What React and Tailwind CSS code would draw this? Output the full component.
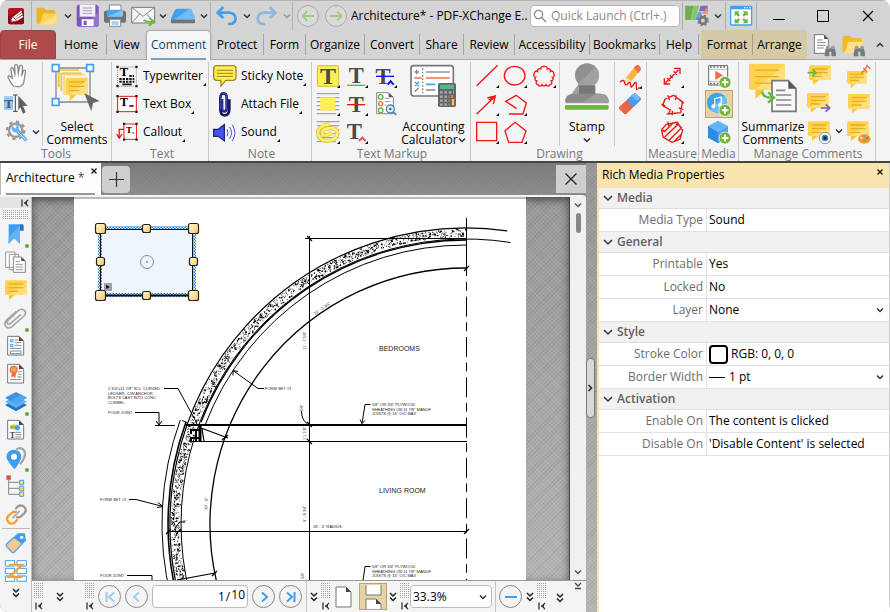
import { useState } from "react";

const CX = 466;
const CY = 524;

// point on a circle around the plan's centre, angle in degrees, 90 = top
const at = (r, deg) => {
  const a = (deg * Math.PI) / 180;
  return `${(CX + r * Math.cos(a)).toFixed(1)} ${(CY - r * Math.sin(a)).toFixed(1)}`;
};
const arc = (r, from, to) => `M${at(r, from)}A${r} ${r} 0 0 0 ${at(r, to)}`;

// concrete hatch: repeatable random specks between the two wall faces
const makeSpecks = () => {
  let seed = 17;
  const rnd = () => {
    seed = (seed * 16807) % 2147483647;
    return seed / 2147483647;
  };
  let fine = "";
  let bold = "";
  for (let i = 0; i < 1350; i++) {
    const p = at(287 + rnd() * 8, 90 + rnd() * 102);
    if (rnd() < 0.4) bold += `M${p}l${(rnd() * 2).toFixed(1)} ${(rnd() * 2 - 1).toFixed(1)}`;
    else fine += `M${p}h0.8`;
  }
  return { fine, bold };
};
const specks = makeSpecks();

// pentagon whose edges are each three small bumps
const cloudPath = (() => {
  const pts = [[699, 26], [728, 47], [717, 80], [681, 80], [670, 47]];
  let d = `M${pts[0].join(" ")}`;
  pts.forEach(([x, y], i) => {
    const [nx, ny] = pts[(i + 1) % 5];
    for (let k = 1; k <= 3; k++) {
      d += `A6.5 6.5 0 0 1 ${(x + ((nx - x) * k) / 3).toFixed(1)} ${(y + ((ny - y) * k) / 3).toFixed(1)}`;
    }
  });
  return d + "z";
})();

const tabs = [
  { name: "Home", cls: "w-[51px] border-r" },
  { name: "View", cls: "w-[39px]" },
  { name: "Comment", cls: "w-[65px]" },
  { name: "Protect", cls: "w-[53px] border-r" },
  { name: "Form", cls: "w-[42px] border-r" },
  { name: "Organize", cls: "w-[59px] border-r" },
  { name: "Convert", cls: "w-[55px] border-r" },
  { name: "Share", cls: "w-[44px] border-r" },
  { name: "Review", cls: "w-[51px] border-r" },
  { name: "Accessibility", cls: "w-[75px] border-r" },
  { name: "Bookmarks", cls: "w-[70px] border-r" },
  { name: "Help", cls: "w-[39px] border-r" },
];

function Icon({ box, w, h, children }) {
  return (
    <svg viewBox={box} width={w} height={h} fill="none" className="block shrink-0 overflow-visible" aria-hidden="true">
      {children}
    </svg>
  );
}

function Chevron({ color = "#333", up = false }) {
  return (
    <Icon box="0 0 8 8" w={8} h={8}>
      <path d={up ? "M1 5.5 4 2.5 7 5.5" : "M1 2.5 4 5.5 7 2.5"} stroke={color} strokeWidth="1.5" />
    </Icon>
  );
}

function DoubleChevron() {
  return (
    <Icon box="0 0 8 10" w={8} h={10}>
      <path d="M1 1 4 4 7 1M1 5.5 4 8.5 7 5.5" stroke="#222" strokeWidth="1.5" />
    </Icon>
  );
}

function Collapse() {
  return (
    <Icon box="0 0 8 8" w={8} h={8}>
      <path d="M1 0.5v7M7 1 4 4 7 7M3 4h3" stroke="#333" strokeWidth="1.3" />
    </Icon>
  );
}

function Dots({ w, h }) {
  const rows = [];
  for (let y = 0.5; y < h; y += 2) rows.push(`M0 ${y}h${w}`);
  return (
    <Icon box={`0 0 ${w} ${h}`} w={w} h={h}>
      <path d={rows.join("")} stroke="#a3a3a3" strokeDasharray="1 1" />
    </Icon>
  );
}

function Grip() {
  return (
    <div className="flex w-[11px] shrink-0 flex-col items-center gap-1">
      <Dots w={9} h={15} />
      <Collapse />
    </div>
  );
}

function Corner() {
  return <span className="mb-1 h-0 w-0 self-end border-b-3 border-l-3 border-b-black border-l-transparent" />;
}

function Bubble({ x, y, w = 66, h = 44, lines = 3 }) {
  const step = h / (lines + 1);
  return (
    <g>
      <rect x={x} y={y} width={w} height={h} rx="4" fill="#ffd24d" />
      <path d={`M${x + w * 0.18} ${y + h - 1}v${h * 0.36}l${w * 0.3}-${h * 0.36}z`} fill="#fcc532" />
      <path d={`M${x + w * 0.15} ${y + h} ${x + w} ${y + 4}v${h - 8}q0 4-4 4z`} fill="#ffdf7d" />
      {Array.from({ length: lines }, (_, i) => (
        <path key={i} d={`M${x + w * 0.16} ${y + step * (i + 1)}h${w * (i === lines - 1 ? 0.45 : 0.68)}`} stroke="#e8ae22" strokeWidth="4" />
      ))}
    </g>
  );
}

function Plus({ x, y }) {
  return (
    <g>
      <circle cx={x} cy={y} r="18" fill="#76b43f" stroke="#fff" strokeWidth="2" />
      <path d={`M${x - 10} ${y}h20M${x} ${y - 10}v20`} stroke="#fff" strokeWidth="6" />
    </g>
  );
}

function BigT({ x, y, size = 72, color = "#4a4a4a" }) {
  return (
    <text x={x} y={y} fontSize={size} fontWeight="bold" fontFamily="Liberation Serif, serif" fill={color} textAnchor="middle">
      T
    </text>
  );
}

function Mark({ x, y }) {
  return <path d={`M${x} ${y}h-9l9-9z`} fill="#000" />;
}

function Binoculars({ x, y }) {
  return (
    <g transform={`translate(${x} ${y})`}>
      <path d="M4 6q5-8 10 0v4h6V6q5-8 10 0l4 20v8H20V20h-6v14H0v-8z" fill="#747b82" />
      <path d="M4 6q5-8 10 0v6H3zM20 6q5-8 10 0l1 6H20z" fill="#99a0a6" />
    </g>
  );
}

function ToolButton({ label, children, className = "w-7" }) {
  return (
    <button type="button" aria-label={label} title={label} className={`flex h-7 items-center justify-center ${className}`}>
      {children}
    </button>
  );
}

function Group({ label, className = "", children }) {
  return (
    <section className={`flex shrink-0 flex-col border-r border-[#c6c6c6] ${className}`}>
      <div className="flex h-[85px]">{children}</div>
      <h2 className="text-center leading-4 whitespace-nowrap text-[#777]">{label}</h2>
    </section>
  );
}

function LabelButton({ label, children }) {
  return (
    <button type="button" className="flex h-7 items-center whitespace-nowrap">
      {children}
      <span className="pl-1">{label}</span>
      <Corner />
    </button>
  );
}

function TitleBar() {
  return (
    <header className="flex h-[30px] items-center border-t border-[#b4b4b4]">
      <button type="button" aria-label="Application menu" className="flex h-full w-8 items-center justify-center border-r border-[#b0b0b0]">
        <Icon box="18 14 54 54" w={18} h={18}>
          <rect x="21" y="17" width="48" height="49" rx="7" fill="#b4131d" />
          <path d="M21 42 69 22v38q0 6-6 6H27q-6 0-6-6z" fill="#8c0c16" />
          <path d="M38 45 62 27M42 49 64 34M46 54 66 42" stroke="#fff" strokeWidth="5" />
          <path d="m28 58 7-14 12 12z" fill="#fff" />
          <path d="m28 58 6-4" stroke="#a00" strokeWidth="3" />
        </Icon>
      </button>
      <ToolButton label="Open" className="w-[30px]">
        <Icon box="104 12 75 64" w={25} h={21}>
          <path d="M108 26q0-6 6-6h16l7 7h23q5 0 5 5v8l-30 30h-21q-6 0-6-6z" fill="#eab32a" />
          <path d="M132 38h43q3 0 2 3l-11 27q-2 4-6 4h-46q10-8 12-29 1-5 6-5z" fill="#fdd35b" />
          <path d="m114 72 62-34-12 32-4 2z" fill="#ffe089" />
        </Icon>
      </ToolButton>
      <ToolButton label="Open recent" className="w-3"><Chevron /></ToolButton>
      <ToolButton label="Save" className="w-[27px]">
        <Icon box="226 10 72 72" w={24} h={24}>
          <path d="M234 12h54l6 6v55q0 5-5 5h-55q-6 0-6-6V18q0-6 6-6z" fill="#7e57b8" />
          <path d="m250 78 44-44v39q0 5-5 5z" fill="#9575cd" />
          <rect x="237" y="12" width="47" height="36" fill="#f1eef6" />
          <path d="M246 22h28M246 30h28M246 38h28" stroke="#a9a3b5" strokeWidth="3" />
          <path d="M243 56h36v20h-36z" fill="#fff" />
          <path d="M249 60h9v13h-9z" fill="#7e57b8" />
        </Icon>
      </ToolButton>
      <ToolButton label="Print">
        <Icon box="309 10 72 72" w={24} h={24}>
          <path d="M328 13h35v22h-35z" fill="#fff" stroke="#888" strokeWidth="3" />
          <rect x="312" y="30" width="66" height="36" rx="6" fill="#707070" />
          <path d="M321 27h48v17q0 4-4 4h-40q-4 0-4-4z" fill="#42a5f5" />
          <path d="M321 48 369 27v17q0 4-4 4z" fill="#7fc3f9" />
          <path d="M329 56h33v21h-33z" fill="#fff" stroke="#888" strokeWidth="3" />
          <path d="M335 64h21M335 70h21" stroke="#42a5f5" strokeWidth="3" />
        </Icon>
      </ToolButton>
      <ToolButton label="Send by e-mail">
        <Icon box="390 12 78 66" w={26} h={22}>
          <path d="M395 19h69v47h-69z" fill="#f4f4f4" stroke="#777" strokeWidth="3" />
          <path d="m395 19 34 27 35-27M395 66l24-27M464 66l-24-27" stroke="#888" strokeWidth="3" />
          <path d="M431 57q10 8 26 5M449 51l12 11-14 12" stroke="#73b53e" strokeWidth="6" />
        </Icon>
      </ToolButton>
      <ToolButton label="E-mail options" className="w-3"><Chevron /></ToolButton>
      <ToolButton label="Scan">
        <Icon box="510 12 78 66" w={26} h={22}>
          <path d="M532 23h37q4 0 6 4l10 24v8h-72v-8l12-24q2-4 7-4z" fill="#42a0f0" />
          <path d="m521 56 48-33q4 0 6 4l10 24v5z" fill="#74bbf6" />
          <path d="M513 56h72v8q0 3-3 3h-66q-3 0-3-3z" fill="#737373" />
        </Icon>
      </ToolButton>
      <ToolButton label="Scan options" className="w-[14px] border-r border-[#b0b0b0]"><Chevron /></ToolButton>
      <ToolButton label="Undo" className="w-[30px]">
        <Icon box="644 12 66 66" w={22} h={22}>
          <path d="M656 35h31q18 2 19 17-1 17-20 17h-3" stroke="#42a0f0" strokeWidth="8" />
          <path d="m669 18-17 17 17 16" stroke="#42a0f0" strokeWidth="8" />
        </Icon>
      </ToolButton>
      <ToolButton label="Undo list" className="w-3"><Chevron /></ToolButton>
      <ToolButton label="Redo">
        <Icon box="764 12 66 66" w={22} h={22}>
          <path d="M818 35h-31q-17 2-18 17 1 17 20 17h3" stroke="#8fb8dc" strokeWidth="8" />
          <path d="m805 18 17 17-17 16" stroke="#8fb8dc" strokeWidth="8" />
        </Icon>
      </ToolButton>
      <ToolButton label="Redo list" className="w-3 border-r border-[#b0b0b0]"><Chevron color="#999" /></ToolButton>
      <ToolButton label="Previous view" className="w-[30px]">
        <Icon box="-12 -12 24 24" w={24} h={24}>
          <circle r="10.5" stroke="#aaa" fill="#dadada" />
          <path d="M6 0H-5M-1-4.500-5.500 0-1 4.500" stroke="#a2cd80" strokeWidth="2" />
        </Icon>
      </ToolButton>
      <ToolButton label="Next view" className="w-[26px]">
        <Icon box="-12 -12 24 24" w={24} h={24}>
          <circle r="10.5" stroke="#aaa" fill="#dadada" />
          <path d="M-6 0H5M1-4.500 5.500 0 1 4.500" stroke="#a2cd80" strokeWidth="2" />
        </Icon>
      </ToolButton>
      <h1 className="min-w-0 flex-1 pl-0.5 whitespace-nowrap">Architecture* - PDF-XChange E..</h1>
      <label className="flex h-[22px] w-[150px] shrink-0 items-center gap-1 rounded-sm border border-[#b8b8b8] bg-white pl-0.5">
        <Icon box="0 0 14 14" w={14} h={14}>
          <circle cx="5.500" cy="5.500" r="4.200" stroke="#888" strokeWidth="1.200" />
          <path d="m8.500 8.500 4.500 4.500" stroke="#888" strokeWidth="1.400" />
        </Icon>
        <input type="text" aria-label="Quick Launch" placeholder="Quick Launch (Ctrl+.)" className="w-full min-w-0 outline-none placeholder:text-[#8a8a8a]" />
      </label>
      <ToolButton label="UI options" className="ml-0.5 w-[29px] border-l border-[#b0b0b0]">
        <Icon box="285 12 78 70" w={26} h={23}>
          <path d="M288 17h25l-8 44h-17z" fill="#6fb04c" />
          <path d="m313 17-8 44h14l12-44z" fill="#8bc46b" />
          <path d="M335 17h22v17h-27z" fill="#8a63c4" />
          <path d="M357 20v22h-18z" fill="#ef8a6c" />
          <path d="m328 37-10 24h8l14-24z" fill="#4ea5ef" />
          <circle cx="342" cy="62" r="10" stroke="#777" strokeWidth="8" />
          <circle cx="342" cy="62" r="15" stroke="#777" strokeWidth="5" strokeDasharray="6 6" />
        </Icon>
      </ToolButton>
      <ToolButton label="UI options list" className="w-[14px]"><Chevron /></ToolButton>
      <ToolButton label="Full screen" className="w-[32px] border-x border-[#b0b0b0]">
        <Icon box="417 12 72 63" w={24} h={21}>
          <rect x="422" y="16" width="63" height="56" rx="2" fill="#fff" stroke="#42a0f0" strokeWidth="4" />
          <path d="M421 15h65v10h-65z" fill="#42a0f0" />
          <path d="M462 20h4M470 20h4M478 20h4" stroke="#fff" strokeWidth="4" />
          <path d="M434 31h15l-5 5 6 6-5 5-6-6-5 5zM473 31h-15l5 5-6 6 5 5 6-6 5 5zM434 67h15l-5-5 6-6-5-5-6 6-5-5zM473 67h-15l5-5-6-6 5-5 6 6 5-5z" fill="#6db33f" />
        </Icon>
      </ToolButton>
      <button type="button" aria-label="Minimize" className="flex w-11 justify-center">
        <Icon box="0 0 12 12" w={12} h={12}><path d="M0 9.500h12" stroke="#000" /></Icon>
      </button>
      <button type="button" aria-label="Maximize" className="flex w-11 justify-center">
        <Icon box="0 0 12 12" w={12} h={12}><path d="M.5.5h11v11H.5z" stroke="#000" /></Icon>
      </button>
      <button type="button" aria-label="Close" className="flex w-[45px] justify-center">
        <Icon box="0 0 12 12" w={12} h={12}><path d="m1 1 10 10M11 1 1 11" stroke="#000" strokeWidth="1.200" /></Icon>
      </button>
    </header>
  );
}

function TabRow({ active, onSelect }) {
  return (
    <nav className="flex h-[30px] items-stretch border-b border-[#a8a8a8]">
      <button type="button" className="w-14 shrink-0 rounded-t-sm border border-[#9a4545] bg-[#ae4a4a] text-white">File</button>
      {tabs.map(t =>
        t.name === active ? (
          <button key={t.name} type="button" className={`-mb-px shrink-0 rounded-t border border-b-0 border-[#aaa] bg-[#f5f5f5] px-1 text-[#153e6b] shadow ${t.cls}`}>
            <span className="flex h-full items-end border-b-2 border-[#7f9fb5] pb-[5px]">
              <span className="w-full text-center">{t.name}</span>
            </span>
          </button>
        ) : (
          <button key={t.name} type="button" onClick={() => onSelect(t.name)} className={`my-1 shrink-0 border-[#a5a5a5] ${t.cls}`}>
            {t.name}
          </button>
        )
      )}
      <div className="ml-0.5 flex shrink-0 border-x border-[#dccb94] bg-[#d5caa5] py-1">
        <button type="button" className="w-[51px] border-r border-[#a9a184]">Format</button>
        <button type="button" className="w-[53px]">Arrange</button>
      </div>
      <div className="flex flex-1 items-center justify-end gap-1">
        <button type="button" aria-label="Find">
          <Icon box="657 99 75 72" w={25} h={24}>
            <path d="M664 104h29l13 13v43h-42z" fill="#fff" stroke="#777" strokeWidth="3" />
            <path d="M693 104v13h13z" fill="#555" />
            <path d="M672 120h16M672 128h26M672 136h26M672 144h20" stroke="#888" strokeWidth="3" />
            <Binoculars x={695} y={135} />
          </Icon>
        </button>
        <button type="button" aria-label="Search">
          <Icon box="741 99 75 72" w={25} h={24}>
            <path d="M745 112q0-5 5-5h18l6 7h25q5 0 5 5v10l-30 30h-24q-5 0-5-5z" fill="#f0bb32" />
            <path d="M766 125h42l-9 29q-1 5-6 5h-45q11-8 13-29 1-5 5-5z" fill="#ffe08a" />
            <Binoculars x={779} y={135} />
          </Icon>
        </button>
        <button type="button" aria-label="Collapse ribbon" className="flex w-5 justify-center"><Chevron up /></button>
      </div>
    </nav>
  );
}

function BigButton({ lines, children, chevron, className = "" }) {
  return (
    <button type="button" className={`flex shrink-0 flex-col items-center justify-between leading-[13px] whitespace-nowrap ${className}`}>
      {children}
      <span>
        {lines[0]}
        <span className="flex h-[13px] items-center justify-center">
          {lines[1]}
          {chevron && <Chevron />}
        </span>
      </span>
    </button>
  );
}

function TextLines({ y }) {
  return <path d={`M20 ${y}h68M20 ${y + 12}h68M20 ${y + 24}h68M20 ${y + 36}h68M20 ${y + 48}h68M20 ${y + 60}h58`} stroke="#a5a5a5" strokeWidth="4" />;
}

function MediaFrame() {
  return (
    <g>
      <path d="M458 23h57v58h-57z" fill="#fff" stroke="#666" strokeWidth="3" />
      <path d="M462 27h50M462 77h50" stroke="#666" strokeWidth="5" strokeDasharray="5 5" />
      <path d="M458 34h57M458 70h57" stroke="#999" strokeWidth="2" />
      <path d="m478 38 23 14-23 14z" fill="#f4694c" />
    </g>
  );
}

function Ribbon() {
  return (
    <div className="flex h-[103px] shrink-0 border-b-2 border-[#444] bg-[#f4f4f4] pt-0.5 pl-px">
      <Group label="Tools" className="w-[111px]">
        <div className="flex w-[42px] flex-col border-r border-[#c9c9c9]">
          <ToolButton label="Hand" className="w-[30px]">
            <Icon box="15 15 69 80" w={23} h={26}>
              <path d="M39 85Q29 72 23 59q1-7 8-3l6 7-5-28q1-8 7-4l6 18-1-26q4-8 9 0l2 24 4-22q5-6 9 1l-2 26 5-14q6-2 6 4l-5 32q-1 8-9 12-12 4-24-1z" fill="#fff" stroke="#8a8a8a" strokeWidth="4" strokeLinejoin="round" />
              <path d="M44 49v9M55 47v9M65 48l-1 9" stroke="#999" strokeWidth="3" />
            </Icon>
          </ToolButton>
          <ToolButton label="Select text" className="w-[30px]">
            <Icon box="9 105 78 66" w={26} h={22}>
              <path d="M12 115h27v40H12z" fill="#8cc8f7" />
              <BigT x={26} y={149} size={40} color="#555" />
              <path d="M39 111h14M46 111v49M39 160h14" stroke="#444" strokeWidth="3" />
              <path d="m55 113 28 30-14 1 8 19-8 4-8-19-6 9z" fill="#606060" />
            </Icon>
          </ToolButton>
          <div className="flex">
            <ToolButton label="Edit tools" className="w-[31px]">
              <Icon box="12 188 72 72" w={24} h={24}>
                <circle cx="44" cy="219" r="20" stroke="#999" strokeWidth="7" />
                <circle cx="44" cy="219" r="26" stroke="#999" strokeWidth="7" strokeDasharray="10 10.400" />
                <path d="m35 207 8 7 4-7-4-4q12-1 10 13l27 30-7 7-28-28q-14 0-14-15z" fill="#63b2f3" />
                <path d="m52 225 22 22" stroke="#e9f5ff" strokeWidth="3" />
              </Icon>
            </ToolButton>
            <ToolButton label="More tools" className="w-2"><Chevron /></ToolButton>
          </div>
        </div>
        <BigButton lines={["Select", "Comments"]} className="w-[68px]">
          <Icon box="156 16 150 153" w={50} h={51}>
            <path d="M168 34h102v102H168z" stroke="#888" strokeWidth="4" />
            <path d="M176 40h60M176 40v52M184 50h60M184 48v55" stroke="#f3bd37" strokeWidth="5" />
            <path d="M192 54h62M192 54v60" stroke="#ffd768" strokeWidth="5" />
            <Bubble x={197} y={63} w={67} h={52} />
            <path d="M157 24h20v20h-20zM260 24h20v20h-20zM157 126h20v20h-20z" fill="#fff" stroke="#42a0f0" strokeWidth="5" />
            <path d="m253 110 46 23-20 6-5 25z" fill="#666" />
          </Icon>
        </BigButton>
      </Group>

      <Group label="Text" className="w-[97px] pl-1">
        <div className="flex flex-col">
          <LabelButton label="Typewriter">
            <Icon box="351 18 69 72" w={23} h={24}>
              <path d="M356 27h56v58h-56z" stroke="#888" strokeWidth="3" strokeDasharray="3 3" />
              <BigT x={375} y={55} size={38} color="#000" />
              <path d="M391 54h14M361 63h45M361 71h45" stroke="#111" strokeWidth="6" strokeDasharray="7 3" />
              <path d="M370 79h28" stroke="#111" strokeWidth="5" />
              <path d="M352 23h7v7h-7zM409 23h7v7h-7zM352 81h7v7h-7zM409 81h7v7h-7z" fill="#222" />
            </Icon>
          </LabelButton>
          <LabelButton label="Text Box">
            <Icon box="351 102 69 66" w={23} h={22}>
              <path d="M356 112h56v46h-56z" fill="#fff" stroke="#ef1111" strokeWidth="3" />
              <BigT x={375} y={142} size={36} color="#000" />
              <path d="M391 141h13" stroke="#111" strokeWidth="4" />
              <path d="M352 108h7v7h-7zM409 108h7v7h-7zM352 155h7v7h-7zM409 155h7v7h-7z" fill="#222" />
            </Icon>
          </LabelButton>
          <LabelButton label="Callout">
            <Icon box="348 186 72 66" w={23} h={22}>
              <path d="M373 194h39v48h-39z" fill="#fff" stroke="#ef1111" strokeWidth="3" />
              <path d="M373 211h-15v26M350 226l8 12 9-12" stroke="#ef1111" strokeWidth="4" />
              <BigT x={389} y={223} size={28} color="#000" />
              <path d="M399 222h6" stroke="#111" strokeWidth="3" />
              <path d="M370 190h7v7h-7zM409 190h7v7h-7zM370 239h7v7h-7zM409 239h7v7h-7z" fill="#222" />
            </Icon>
          </LabelButton>
        </div>
      </Group>

      <Group label="Note" className="w-[103px] pl-[3px]">
        <div className="flex flex-col">
          <LabelButton label="Sticky Note">
            <Icon box="636 18 75 72" w={25} h={24}>
              <path d="M650 23h49q9 0 9 9v26q0 9-9 9h-22l-14 17v-17h-13q-9 0-9-9V32q0-9 9-9z" fill="#ffee55" stroke="#a58a19" strokeWidth="4" />
              <path d="M650 37h49M650 46h49M650 55h49" stroke="#9c8420" strokeWidth="3" />
            </Icon>
          </LabelButton>
          <LabelButton label="Attach File">
            <Icon box="636 99 75 78" w={25} h={26}>
              <path d="M666 123v27q0 10 7 10t7-10v-30q0-14-9-14t-10 14v34q0 18 13 18t14-18v-30" stroke="#151a68" strokeWidth="8" />
              <path d="M666 123v27q0 10 7 10t7-10v-30q0-14-9-14t-10 14v34" stroke="#5563d5" strokeWidth="2" />
            </Icon>
          </LabelButton>
          <LabelButton label="Sound">
            <Icon box="636 186 75 69" w={25} h={23}>
              <path d="M641 211h14l18-14v48l-18-13h-14z" fill="#4455ee" stroke="#1a2485" strokeWidth="4" />
              <path d="M681 211q6 10 0 21M689 204q11 17 0 35M697 197q15 24 0 49" stroke="#4a5ac8" strokeWidth="3" />
            </Icon>
          </LabelButton>
        </div>
      </Group>

      <Group label="Text Markup" className="w-[159px] pl-0.5">
        <div className="grid w-[86px] shrink-0 grid-cols-3 content-start">
          <ToolButton label="Highlight">
            <Icon box="18 18 75 72" w={25} h={24}>
              <rect x="22" y="23" width="64" height="62" rx="4" fill="#ffee55" stroke="#d4ba36" strokeWidth="3" />
              <BigT x={54} y={77} />
              <Mark x={90} y={90} />
            </Icon>
          </ToolButton>
          <ToolButton label="Underline">
            <Icon box="102 18 75 72" w={25} h={24}>
              <BigT x={139} y={75} size={68} />
              <path d="M111 82h54" stroke="#22dd22" strokeWidth="4" />
              <Mark x={174} y={90} />
            </Icon>
          </ToolButton>
          <ToolButton label="Replace text">
            <Icon box="186 18 75 72" w={25} h={24}>
              <BigT x={216} y={77} size={68} />
              <path d="M195 55h54" stroke="#1111ee" strokeWidth="4" />
              <path d="m230 80 9-10 9 10" stroke="#1111ee" strokeWidth="6" />
              <Mark x={258} y={90} />
            </Icon>
          </ToolButton>
          <ToolButton label="Highlight area">
            <Icon box="18 102 75 72" w={25} h={24}>
              <TextLines y={107} />
              <path d="M31 118h45v39H31z" fill="#ffee55" />
              <Mark x={90} y={174} />
            </Icon>
          </ToolButton>
          <ToolButton label="Strikeout">
            <Icon box="102 102 75 72" w={25} h={24}>
              <BigT x={139} y={162} size={68} />
              <path d="M111 140h54" stroke="#ef1111" strokeWidth="4" />
              <Mark x={174} y={174} />
            </Icon>
          </ToolButton>
          <ToolButton label="Review markup">
            <Icon box="186 99 75 78" w={25} h={26}>
              <path d="M197 104h36l14 14v49h-50z" fill="#fff" stroke="#888" strokeWidth="3" />
              <path d="M233 104v14h14z" fill="#555" />
              <circle cx="209" cy="117" r="7" stroke="#6db33f" strokeWidth="4" />
              <circle cx="209" cy="137" r="6" stroke="#ef6a4c" strokeWidth="4" />
              <circle cx="209" cy="157" r="7" stroke="#6db33f" strokeWidth="4" />
              <path d="M221 121h14M221 131h18M221 141h6" stroke="#999" strokeWidth="3" />
              <circle cx="238" cy="153" r="12" fill="#dff0ff" stroke="#5b7f9c" strokeWidth="4" />
              <circle cx="238" cy="153" r="4" fill="#2277c0" />
              <path d="m246 161 10 10" stroke="#3388dd" strokeWidth="5" />
            </Icon>
          </ToolButton>
          <ToolButton label="Pencil highlight">
            <Icon box="18 186 75 72" w={25} h={24}>
              <TextLines y={191} />
              <path d="M58 198q-40 8-33 33 5 18 28 17 29-2 29-24-3-17-29-13-20 5-16 17 9 10 29-5" stroke="#d8c437" strokeWidth="12" />
              <path d="M58 198q-40 8-33 33 5 18 28 17 29-2 29-24-3-17-29-13-20 5-16 17 9 10 29-5" stroke="#ffee66" strokeWidth="8" />
              <Mark x={90} y={258} />
            </Icon>
          </ToolButton>
          <ToolButton label="Insert text">
            <Icon box="102 186 75 72" w={25} h={24}>
              <BigT x={133} y={243} size={68} />
              <path d="m147 249 10-10 10 10" stroke="#e65050" strokeWidth="6" />
              <Mark x={174} y={258} />
            </Icon>
          </ToolButton>
        </div>
        <BigButton lines={["Accounting", "Calculator"]} chevron className="w-[67px]">
          <Icon box="297 30 147 141" w={49} h={47}>
            <rect x="303" y="41" width="127" height="91" rx="8" fill="#fff" stroke="#777" strokeWidth="5" />
            <path d="M338 49v76" stroke="#888" strokeWidth="4" strokeDasharray="5 5" />
            <path d="M348 60h72" stroke="#888" strokeWidth="4" />
            <path d="M313 78h22M348 78h72" stroke="#f07050" strokeWidth="5" />
            <path d="m315 90 12 12m0-12-12 12M348 97h28" stroke="#42a0f0" strokeWidth="5" />
            <path d="M313 60h14M320 53v14M314 119l12-12M348 114h28" stroke="#888" strokeWidth="4" />
            <rect x="384" y="93" width="54" height="72" rx="5" fill="#666" />
            <path d="M390 98h42v13h-42z" fill="#52b58c" />
            <path d="M390 121h42M390 134h28M390 146h28M390 158h28" stroke="#aaa" strokeWidth="7" strokeDasharray="8 5" />
            <path d="M426 129v9" stroke="#f07050" strokeWidth="7" />
            <path d="M429 141v19" stroke="#f8bf3a" strokeWidth="7" />
          </Icon>
        </BigButton>
      </Group>

      <Group label="Drawing" className="w-[176px] pl-0.5">
        <div className="grid w-[87px] shrink-0 grid-cols-3 content-start border-r border-[#c9c9c9]">
          <ToolButton label="Line">
            <Icon box="495 18 75 72" w={25} h={24}><path d="m500 83 63-61" stroke="#f01515" strokeWidth="4" /><Mark x={567} y={90} /></Icon>
          </ToolButton>
          <ToolButton label="Oval">
            <Icon box="579 18 75 72" w={25} h={24}><ellipse cx="614" cy="53" rx="31" ry="28" stroke="#f01515" strokeWidth="4" /><Mark x={651} y={90} /></Icon>
          </ToolButton>
          <ToolButton label="Cloud">
            <Icon box="663 18 75 72" w={25} h={24}>
              <path d={cloudPath} stroke="#f01515" strokeWidth="4" />
              <Mark x={735} y={90} />
            </Icon>
          </ToolButton>
          <ToolButton label="Arrow">
            <Icon box="495 102 75 72" w={25} h={24}><path d="m500 168 54-52M532 120l24-6-6 24M554 116l-18 10" stroke="#f01515" strokeWidth="4" /><Mark x={567} y={174} /></Icon>
          </ToolButton>
          <ToolButton label="Polyline">
            <Icon box="579 102 75 72" w={25} h={24}><path d="m620 152-33-22 32-18 30 23-10 33h-42" stroke="#f01515" strokeWidth="4" /><Mark x={651} y={174} /></Icon>
          </ToolButton>
          <span />
          <ToolButton label="Rectangle">
            <Icon box="495 186 75 72" w={25} h={24}><path d="M500 193h60v55h-60z" stroke="#f01515" strokeWidth="4" /><Mark x={567} y={258} /></Icon>
          </ToolButton>
          <ToolButton label="Polygon">
            <Icon box="579 186 75 72" w={25} h={24}><path d="m615 193 33 26-12 34h-40l-11-34z" stroke="#f01515" strokeWidth="4" /><Mark x={651} y={258} /></Icon>
          </ToolButton>
        </div>
        <BigButton lines={["Stamp", ""]} chevron className="w-[54px]">
          <Icon box="21 16 144 147" w={48} h={49}>
            <circle cx="93" cy="56" r="36" fill="#919191" />
            <path d="M68 81 118 30q11 12 11 26 0 22-18 32v22q8 1 24 2 20 2 23 28H28z" fill="#a1a1a1" />
            <path d="M69 86h49v28H69z" fill="#777" />
            <path d="M27 137q0-26 26-26h81q24 0 24 26z" fill="#8a8a8a" />
            <path d="m77 137 45-26h12q24 0 24 26z" fill="#9d9d9d" />
            <rect x="27" y="145" width="131" height="14" rx="4" fill="#70b542" />
          </Icon>
        </BigButton>
        <div className="flex flex-col border-l border-[#c9c9c9] pl-px">
          <ToolButton label="Pencil">
            <Icon box="186 18 75 75" w={25} h={25}>
              <path d="m211 58 28-35 15 13-28 33-18 6z" fill="#f9b340" />
              <path d="m233 31 6-8q6-5 12 1t3 12l-6 9z" fill="#ed6f4d" />
              <path d="m208 75 4-17 14 11z" fill="#ffe0a8" />
              <path d="M192 72q12-10 14 2t10 3 8 4 9-2 8 5 9 3" stroke="#e01515" strokeWidth="4" />
              <Mark x={258} y={92} />
            </Icon>
          </ToolButton>
          <ToolButton label="Eraser">
            <Icon box="186 102 75 72" w={25} h={24}>
              <path d="m190 146 42-38q4-4 9 0l12 11q4 4 0 8l-41 40q-4 3-8 0l-14-13q-4-4 0-8z" fill="#e8674a" />
              <path d="m212 126 20-18q4-4 9 0l12 11q4 4 0 8l-20 20z" fill="#42a0f0" />
              <path d="m232 108 9 0 12 11-10 9-19-16z" fill="#74bbf6" />
            </Icon>
          </ToolButton>
        </div>
      </Group>

      <Group label="Measure" className="w-[52px] items-stretch">
        <div className="flex w-full flex-col items-center">
          <ToolButton label="Distance">
            <Icon box="315 18 75 72" w={25} h={24}><path d="m331 75 40-40M328 61v17h17M357 31h18v17M336 60l10 10M356 40l10 10M345 52l8 8" stroke="#e81515" strokeWidth="4" /><Mark x={387} y={90} /></Icon>
          </ToolButton>
          <ToolButton label="Perimeter">
            <Icon box="315 102 75 75" w={25} h={25}>
              <path d="m330 123 26-11 26 20-5 32-42 4M330 123l-7 20 23 13-6 12M338 112l6 14M364 112l-3 14M376 126l11 10M371 150l14 4M352 158v14M319 138l12 6" stroke="#e81515" strokeWidth="4" />
              <Mark x={387} y={174} />
            </Icon>
          </ToolButton>
          <ToolButton label="Area">
            <Icon box="315 186 75 72" w={25} h={24}>
              <path d="m334 199 32-6 17 23-8 28-24 9-27-16-4-22zM327 222l28-28M329 237l42-40M343 246l38-38M358 250l22-22M338 191l4 14M319 216l13 4M369 191l-6 12" stroke="#e81515" strokeWidth="4" />
              <Mark x={387} y={258} />
            </Icon>
          </ToolButton>
        </div>
      </Group>

      <Group label="Media" className="w-10">
        <div className="flex w-full flex-col items-center">
          <ToolButton label="Add video">
            <Icon box="450 18 78 75" w={26} h={25}><MediaFrame /><Plus x={507} y={73} /></Icon>
          </ToolButton>
          <ToolButton label="Add sound" className="w-7 border border-[#bba36a] bg-[#e6d3a4]">
            <Icon box="450 102 78 75" w={26} h={25}>
              <circle cx="483" cy="134" r="30" fill="#38a5ea" />
              <path d="M462 155 504 113q9 10 9 21 0 30-30 30-12 0-21-9z" fill="#67bff3" />
              <path d="M476 145v-23l20-5v24" stroke="#fff" strokeWidth="4" />
              <circle cx="472" cy="145" r="6" fill="#fff" />
              <circle cx="492" cy="141" r="6" fill="#fff" />
              <Plus x={507} y={157} />
            </Icon>
          </ToolButton>
          <ToolButton label="Add 3D">
            <Icon box="450 186 78 75" w={26} h={25}>
              <path d="m486 188 30 16-30 17-30-17z" fill="#64b5f6" />
              <path d="m456 204 30 17v35l-30-17z" fill="#2e8be0" />
              <path d="m516 204-30 17v35l30-17z" fill="#48a3f2" />
              <Plus x={507} y={240} />
            </Icon>
          </ToolButton>
        </div>
      </Group>

      <Group label="Manage Comments" className="w-[137px] pl-0.5">
        <BigButton lines={["Summarize", "Comments"]} className="w-[64px]">
          <Icon box="576 16 150 153" w={50} h={51}>
            <Bubble x={579} y={21} w={108} h={78} lines={3} />
            <path d="M648 72h49l23 24v68h-72z" fill="#f8f8f8" stroke="#777" strokeWidth="5" />
            <path d="M697 72v24h23z" fill="#555" />
            <path d="M660 101h28M660 115h46M660 130h46M660 145h46" stroke="#888" strokeWidth="5" />
            <path d="M618 106q4 18 30 17M636 107l18 16-18 15" stroke="#6db33f" strokeWidth="7" />
          </Icon>
        </BigButton>
        <div className="flex flex-col">
          <ToolButton label="Import comments">
            <Icon box="750 18 78 72" w={26} h={24}><Bubble x={759} y={22} /><path d="M755 44h23M769 34l11 10-11 10" stroke="#6db33f" strokeWidth="5" /></Icon>
          </ToolButton>
          <ToolButton label="Export comments">
            <Icon box="750 102 78 72" w={26} h={24}><Bubble x={753} y={105} /><path d="M794 150h24M809 139l12 11-12 11" stroke="#7e57c2" strokeWidth="5" /></Icon>
          </ToolButton>
          <ToolButton label="Show comments">
            <Icon box="750 186 78 75" w={26} h={25}>
              <Bubble x={756} y={190} />
              <circle cx="807" cy="240" r="17" fill="#fff" stroke="#8a9199" strokeWidth="3" />
              <circle cx="807" cy="240" r="10" fill="#2e86c8" />
              <circle cx="807" cy="240" r="5" fill="#222" />
            </Icon>
          </ToolButton>
        </div>
        <div className="flex w-[11px] flex-col items-center justify-end pb-[11px]"><Chevron /></div>
        <div className="flex flex-col">
          <ToolButton label="Pin comments">
            <Icon box="870 15 75 75" w={25} h={25}>
              <Bubble x={873} y={36} w={60} h={38} />
              <path d="m916 42 10-9M922 27l12 13M926 31l9-9M931 18l12 11" stroke="#ef6a4c" strokeWidth="4" />
            </Icon>
          </ToolButton>
          <ToolButton label="Flatten comments">
            <Icon box="870 102 75 72" w={25} h={24}><Bubble x={876} y={108} /></Icon>
          </ToolButton>
          <ToolButton label="Comment styles">
            <Icon box="870 186 75 75" w={25} h={25}>
              <Bubble x={873} y={190} />
              <ellipse cx="925" cy="243" rx="19" ry="14" fill="#f39a35" />
              <circle cx="916" cy="240" r="3" fill="#fff" /><circle cx="925" cy="235" r="3" fill="#42a0f0" />
              <circle cx="934" cy="241" r="3" fill="#c33" /><circle cx="926" cy="249" r="3" fill="#7a4" />
            </Icon>
          </ToolButton>
        </div>
      </Group>
    </div>
  );
}

function DocIcon({ y, children }) {
  return (
    <Icon box={`12 ${y} 72 69`} w={24} h={23}>
      <path d={`M23 ${y + 4}h34l14 14v42H23z`} fill="#fff" stroke="#777" strokeWidth="3" />
      <path d={`M57 ${y + 4}v14h14z`} fill="#444" />
      {children}
    </Icon>
  );
}

const paneIcons = [
  {
    label: "Bookmarks", dot: true,
    icon: (
      <Icon box="12 189 72 69" w={24} h={23}>
        <path d="M26 193h34v58l-17-16-17 16z" fill="#3f9df0" />
        <path d="m26 232 34-36v55l-17-16-17 16z" fill="#62b2f6" />
        <path d="M60 193h7q4 0 4 5v14H60z" fill="#2277c8" />
      </Icon>
    ),
  },
  {
    label: "Thumbnails",
    icon: (
      <Icon box="12 270 75 72" w={25} h={24}>
        <path d="M20 276h28v46H20zM31 283h28v46H31z" fill="#fff" stroke="#999" strokeWidth="3" />
        <path d="M43 291h24l12 12v34H43z" fill="#fff" stroke="#888" strokeWidth="3" />
        <path d="M67 291v12h12z" fill="#444" />
        <path d="M50 305h13M50 313h22M50 321h22M50 329h22" stroke="#999" strokeWidth="3" />
      </Icon>
    ),
  },
  { label: "Comments", icon: <Icon box="12 357 72 69" w={24} h={23}><Bubble x={15} y={361} /></Icon> },
  {
    label: "Attachments", dot: true,
    icon: (
      <Icon box="9 438 75 69" w={25} h={23}>
        <path d="m63 460-32 28q-6 4-9-1t2-9l31-29q10-8 18-1t-1 17l-36 32q-11 8-18 0t1-19l30-27" stroke="#a5a5a5" strokeWidth="5" />
      </Icon>
    ),
  },
  {
    label: "Fields",
    icon: (
      <DocIcon y={522}>
        <path d="M31 536h8v6h-8zM31 550h8v6h-8zM31 570h32v8H31z" stroke="#42a0f0" strokeWidth="3" />
        <path d="M44 537h12M44 545h20M44 553h20M30 562h34" stroke="#888" strokeWidth="3" />
      </DocIcon>
    ),
  },
  {
    label: "Signatures",
    icon: (
      <DocIcon y={608}>
        <circle cx="41" cy="628" r="10" fill="#f8a04a" stroke="#ee6a40" strokeWidth="4" />
        <path d="m36 638-4 14 8-4 6 5 2-14" fill="#ee6a40" />
        <path d="M55 634h10M55 642h10M52 650h13M30 658h34" stroke="#888" strokeWidth="3" />
      </DocIcon>
    ),
  },
  {
    label: "Layers", dot: true,
    icon: (
      <Icon box="12 63 72 66" w={24} h={22}>
        <path d="m48 88 33 17-33 19-33-19z" fill="#1f74c4" />
        <path d="m48 78 33 17-33 19-33-19z" fill="#5fb0f5" />
        <path d="m48 66 33 17-33 19-33-19z" fill="#3b93e2" />
        <path d="m31 92 33-18 17 9-33 19z" fill="#4fa6f0" />
      </Icon>
    ),
  },
  {
    label: "Content",
    icon: (
      <DocIcon y={145}>
        <path d="m43 156 10 20H33z" fill="#fdc43c" />
        <circle cx="52" cy="171" r="8" fill="#4aa3ee" />
        <path d="M31 164h10v10H31z" fill="#7bbb4a" />
        <text x="29" y="201" fontSize="24" fontWeight="bold" fontFamily="Liberation Serif, serif" fill="#444">T</text>
        <path d="M46 185h18M46 192h18M46 199h18" stroke="#888" strokeWidth="3" />
      </DocIcon>
    ),
  },
  {
    label: "Destinations", dot: true,
    icon: (
      <Icon box="12 225 72 75" w={24} h={25}>
        <path d="M49 236q9-8 19-2 10 8 6 22-3 12-14 24" stroke="#a5a5a5" strokeWidth="7" />
        <path d="M42 236q22 2 22 21-1 13-20 38-23-24-25-38 2-20 23-21z" fill="#3f9df0" />
        <circle cx="42" cy="257" r="9" fill="#fff" />
      </Icon>
    ),
  },
  {
    label: "Model tree",
    icon: (
      <Icon box="15 312 69 72" w={23} h={24}>
        <path d="M29 329v44h33M29 337h33M29 355h33" stroke="#888" strokeWidth="3" />
        <path d="M23 317h12v12H23z" fill="#ee4a30" stroke="#888" strokeWidth="2" />
        <path d="M62 331h12v13H62zM62 349h12v13H62zM62 366h12v13H62z" fill="#ffe25e" stroke="#42a0f0" strokeWidth="3" />
      </Icon>
    ),
  },
  {
    label: "Links",
    icon: (
      <Icon box="12 396 72 69" w={24} h={23}>
        <path d="m46 414 8-8q10-6 19 2 8 9 1 18l-12 11q-7 4-14 0" stroke="#999" strokeWidth="7" />
        <path d="m53 445-9 10q-10 6-18-1-9-9-2-18l12-11q7-5 14-1" stroke="#f5a12c" strokeWidth="7" />
        <path d="m37 442 22-22" stroke="#aaa" strokeWidth="5" />
      </Icon>
    ),
  },
];

function SidePane() {
  return (
    <aside className="flex w-8 shrink-0 flex-col items-center border-r border-[#bbb] bg-[#f4f4f4]">
      <div className="flex h-[11px] w-full shrink-0 items-center justify-end bg-[#e3e3e3] pr-0.5"><Collapse /></div>
      <div className="flex h-3 shrink-0 items-center"><Dots w={25} h={9} /></div>
      {paneIcons.map(p => (
        <button key={p.label} type="button" aria-label={p.label} title={p.label} className="relative flex h-7 w-full shrink-0 items-center justify-center">
          {p.icon}
          {p.dot && <span className="absolute right-0.5 bottom-0 h-1 w-1 rounded-full bg-[#5fa82a]" />}
        </button>
      ))}
      <div className="h-px w-7 shrink-0 bg-[#bbb]" />
      <button type="button" aria-label="Properties" className="flex h-7 w-full shrink-0 items-center justify-center">
        <Icon box="12 489 72 72" w={24} h={24}>
          <path d="m20 527 35-30 18 1 3 19-33 35q-4 4-8 0l-15-17q-3-4 0-8z" fill="#f8c98a" />
          <path d="m55 497 18 1 3 19-10 11-25-19z" fill="#3f9df0" />
          <path d="m20 527 35-30 18 1 3 19-33 35q-4 4-8 0l-15-17q-3-4 0-8z" stroke="#4ba4ee" strokeWidth="4" />
          <circle cx="65" cy="508" r="5" fill="#fff" />
        </Icon>
      </button>
      <button type="button" aria-label="Articles" className="flex h-7 w-full shrink-0 items-center justify-center">
        <Icon box="12 573 72 72" w={24} h={24}>
          <path d="M16 578h28v16H16zM51 578h28v16H51zM16 601h28v16H16zM51 601h28v16H51zM16 624h28v16H16zM51 624h28v16H51z" fill="#fff" stroke="#42a0f0" strokeWidth="3" />
          <path d="M26 590h42L26 627h42" stroke="#f5a12c" strokeWidth="6" />
        </Icon>
      </button>
      <button type="button" aria-label="More panes" className="flex h-4 w-full items-center justify-center"><DoubleChevron /></button>
    </aside>
  );
}

function Notes({ x, y, lines }) {
  return (
    <text fontSize="4" fill="#222">
      {lines.map((l, i) => (
        <tspan key={l} x={x} y={y + i * 4.6}>{l}</tspan>
      ))}
    </text>
  );
}

function PlanDrawing() {
  const sheathing = ['5/8" OR 3/4" PLYWOOD', 'SHEATHING ON 11 7/8" MANUF', 'JOISTS @ 16" O/C MAX'];
  return (
    <svg viewBox="74 197 452 383" width="452" height="383" className="block shrink-0 bg-white" fontFamily="Liberation Sans, sans-serif" role="img" aria-label="Floor plan">
      <defs>
        <pattern id="ants" width="3" height="3" patternUnits="userSpaceOnUse">
          <path d="M0 0h1.500v1.500H0zM1.500 1.500H3V3H1.500z" fill="#1c78c8" />
        </pattern>
        <linearGradient id="grab" x2="1" y2="1">
          <stop stopColor="#fff8dc" />
          <stop offset="1" stopColor="#ffc65c" />
        </linearGradient>
      </defs>
      <path d="M74 197h453v2H74z" fill="#bbb" />

      <g fill="none" stroke="#000">
        <path d={specks.fine} strokeWidth="0.8" />
        <path d={specks.bold} strokeWidth="1.300" />
        <path d={arc(296, 82, 194)} strokeWidth="1.200" />
        <path d={arc(285, 81, 194)} strokeWidth="1" />
        <path d={arc(284, 90, 159)} strokeWidth="1.400" />
        <path d={arc(279, 90, 159)} />
        <path d={arc(256, 90, 194)} strokeWidth="1.300" />
        <path d={`${arc(304, 160, 194)}M182 420.500l5 2`} />
        <path d={arc(298, 160, 194)} strokeWidth="1.600" />

        <path d="M305 238.500h161M309.500 236v344M466.500 218v58M190 441.500h277M168 531.500h299" />
        <path d="M466.500 282v298" strokeDasharray="8.700 6 20 5.600" />
        <path d="M186 425h281" strokeWidth="2" />
        <path d="m307 236 5 5M464 271l5-5M307 422l5 5M307 439l5 5M464 534l5-5M166 534l5-5M176 534l5-5M212 576l5-5" strokeWidth="1.200" />

        <path d="M200 424v18" strokeWidth="3" />
        <path d="M191 430v4M191 437v5M196 429v12M190 430h9M190 438h9" strokeWidth="2" />
        <path d="m201 428 27 10M202 429l2 12M222 440l6-5M177 580l38-7" strokeWidth="1.200" />
        <path d="M164 388.500h14l19 35M135 412.500h24V424m-3-3 3 4 3-4M155 425.500h20" />
        <path d="M129 499.500h7l27 7m-5-4 5 4-6 1M127 575.500h25v5M264 388.500h-6l-25-18m0 5v-5l5 1" />
        <path d="M370.500 404.500H365l-3 19m-2-4 2 4 3-3M370.500 566.500H365l-2 14M301.500 411q0 9 6 13" />
        <path d="m175 528 5-6h5" />
      </g>

      <g fill="#222">
        <text x="379" y="351" fontSize="7">BEDROOMS</text>
        <text x="379" y="493" fontSize="7">LIVING ROOM</text>
        <g fontSize="4">
          <text x="265" y="390">FORM SET #3</text>
          <text x="108" y="414">POUR JOINT</text>
          <text x="100" y="501">FORM SET #2</text>
          <text x="100" y="577">POUR JOINT</text>
          <text x="313" y="528">{"18' - 0\"  RADIUS"}</text>
          <text x="183" y="523">8"</text>
          <text transform="translate(306 350) rotate(-90)">{"11' - 7 5/8\""}</text>
          <text transform="translate(306 440) rotate(-90)">{"1'1 7/8\""}</text>
          <text transform="translate(303 411) rotate(-90)">{"5/8\""}</text>
          <text transform="translate(306 522) rotate(-90)">{"9' - 8 3/4\""}</text>
          <text transform="translate(304 579) rotate(-90)">{"5/8\""}</text>
          <text transform="translate(207 510) rotate(-86)">{"10' - 0\""}</text>
          <text transform="translate(315 315) rotate(-35)">{"22' - 3 3/4\""}</text>
        </g>
      </g>
      <Notes x={108} y={390} lines={["1 3/4\"x11 7/8\" SCL 'CURVED'", "LEDGER, C/W ANCHOR", "BOLTS CAST INTO CONC", "CORBEL"]} />
      <Notes x={372} y={406} lines={sheathing} />
      <Notes x={372} y={568} lines={sheathing} />

      {/* selected media annotation */}
      <rect x="100" y="228" width="94" height="67" fill="#eff5fc" stroke="url(#ants)" strokeWidth="4" />
      <path d="M100.500 229v66M101 229.500h92M192.500 229v66" stroke="#111" />
      <path d="M101 295.500h92" stroke="#111" strokeWidth="2" />
      <circle cx="147" cy="262" r="6.500" fill="none" stroke="#888" />
      <circle cx="147" cy="262" r="1" fill="#888" />
      <path d="M104 283h8v8h-8z" fill="#9aa3ad" />
      <path d="m106 285 4 2-4 2z" fill="#111" />
      <g fill="url(#grab)" stroke="#222" strokeWidth="1.200">
        {[[100, 228], [193, 228], [100, 295], [193, 295]].map(([x, y]) => (
          <rect key={`${x}-${y}`} x={x - 4.5} y={y - 4.5} width="10" height="10" rx="2" />
        ))}
        {[[146, 228], [100, 261], [193, 261], [146, 295]].map(([x, y]) => (
          <rect key={`${x}-${y}`} x={x - 3.5} y={y - 3.5} width="8" height="8" rx="2" />
        ))}
      </g>
    </svg>
  );
}

function RoundButton({ label, d, color = "#3f9df0" }) {
  return (
    <button type="button" aria-label={label} className="flex h-[23px] w-[23px] shrink-0 items-center justify-center rounded-full border border-[#888] bg-[#f4f4f4]">
      <Icon box="-7 -7 14 14" w={14} h={14}><path d={d} stroke={color} strokeWidth="2" /></Icon>
    </button>
  );
}

function StatusBar() {
  const [page, setPage] = useState("1");
  const [zoom, setZoom] = useState("33.3%");
  return (
    <footer className="flex h-8 shrink-0 items-center overflow-hidden border-t border-[#999] bg-[#f4f4f4] pl-px">
      <Grip />
      <span className="ml-3 flex w-6 shrink-0 justify-start"><DoubleChevron /></span>
      <span className="ml-1 flex"><Grip /></span>
      <div className="ml-[3px] flex shrink-0 items-center gap-1">
        <RoundButton label="First page" d="M-3.500-5V5M4-4.500-1 0 4 4.500" color="#9fcdf3" />
        <RoundButton label="Previous page" d="M2-4.500-3 0 2 4.500" color="#9fcdf3" />
        <label className="flex h-[23px] w-24 items-center rounded-sm border border-[#bbb] bg-white pr-0.5">
          <input type="text" aria-label="Page" value={page} onChange={e => setPage(e.target.value)} className="w-full min-w-0 text-right outline-none" />
          <span className="px-px">/</span>
          <span className="pb-1">10</span>
        </label>
        <RoundButton label="Next page" d="M-2-4.500 3 0-2 4.500" />
        <RoundButton label="Last page" d="M3.500-5V5M-4-4.500 1 0-4 4.500" />
      </div>
      <span className="ml-1 flex h-full w-3 shrink-0 items-center justify-end border-l border-[#c4c4c4]"><DoubleChevron /></span>
      <span className="ml-0.5 flex"><Grip /></span>
      <button type="button" aria-label="Single page" className="ml-1 flex w-6 shrink-0 items-center">
        <Icon box="0 0 17 22" w={17} h={22}><path d="M1 1h10l5 5v15H1z" fill="#fff" stroke="#777" /><path d="M11 1v5h5z" fill="#444" /></Icon>
      </button>
      <button type="button" aria-label="Continuous" className="flex h-[27px] w-7 shrink-0 items-center justify-center border border-[#bba36a] bg-[#e6d3a4]">
        <Icon box="0 0 17 24" w={17} h={24}>
          <path d="M1 0v10h15V0M1 24V14h10l5 5v5" fill="#fff" stroke="#777" />
          <path d="M11 14v5h5z" fill="#444" />
        </Icon>
      </button>
      <span className="ml-0.5 flex shrink-0"><DoubleChevron /></span>
      <span className="ml-0.5 flex"><Grip /></span>
      <label className="flex h-[23px] w-[82px] shrink-0 items-center rounded-sm border border-[#bbb] bg-white pr-1 pl-0.5">
        <select aria-label="Zoom" value={zoom} onChange={e => setZoom(e.target.value)} className="w-full appearance-none outline-none">
          <option>33.3%</option>
          <option>50%</option>
          <option>100%</option>
        </select>
        <Chevron />
      </label>
      <span className="mx-[3px] h-full w-px shrink-0 bg-[#c4c4c4]" />
      <RoundButton label="Zoom out" d="M-6 0H6" />
      <span className="ml-1 flex shrink-0"><DoubleChevron /></span>
      <span className="ml-0.5 flex"><Grip /></span>
      <span className="ml-auto flex shrink-0 self-stretch pt-2 pr-1.5"><span className="pt-1"><DoubleChevron /></span></span>
      <button type="button" aria-label="Page end" className="flex w-4 shrink-0 justify-center self-start pt-px">
        <Icon box="0 0 8 8" w={8} h={8}><path d="M1 1 4 4 7 1M1 6.500h6" stroke="#444" strokeWidth="1.300" /></Icon>
      </button>
    </footer>
  );
}

const mesh =
  "bg-[repeating-linear-gradient(45deg,#ffffff12_0_1px,transparent_1px_3px),repeating-linear-gradient(-45deg,#00000010_0_1px,transparent_1px_3px),linear-gradient(#979797,#b6b6b6)]";

function Document() {
  return (
    <main className={`flex min-w-0 flex-1 ${mesh}`}>
      <div className="flex min-w-0 flex-1 flex-col">
        <div className="flex h-8 shrink-0 items-start justify-between bg-[#828282]/50 bg-[linear-gradient(#6a6a6a80,#8a8a8a40)]">
          <div className="flex items-start gap-px">
            <div className="flex h-8 w-[101px] border-l border-[#bbb] bg-[#fdfdfd] pr-1 pl-[5px]">
              <button type="button" className="flex-1 border-b-2 border-[#999] text-left whitespace-nowrap">
                Architecture <span className="text-[#1d4f86]">*</span>
              </button>
              <button type="button" aria-label="Close document" className="-ml-1 flex h-4 items-center">
                <Icon box="0 0 6 6" w={6} h={6}><path d="m.5.5 5 5M5.500.5l-5 5" stroke="#111" strokeWidth="1.300" /></Icon>
              </button>
            </div>
            <button type="button" aria-label="New tab" className="mt-[3px] flex h-[27px] w-7 items-center justify-center rounded-sm bg-[#cfcfcf]">
              <Icon box="0 0 15 15" w={15} h={15}><path d="M7.500 0v15M0 7.500h15" stroke="#333" strokeWidth="1.200" /></Icon>
            </button>
          </div>
          <button type="button" aria-label="Close all" className="mt-0.5 flex h-7 w-[30px] items-center justify-center bg-[#cfcfcf]">
            <Icon box="0 0 12 12" w={12} h={12}><path d="m.5.5 11 11m0-11-11 11" stroke="#222" strokeWidth="1.300" /></Icon>
          </button>
        </div>
        <div className="flex min-h-0 flex-1 rounded-tr-sm border-t-2 border-[#f4f4f4]">
          <SidePane />
          <div className="flex min-w-0 flex-1 flex-col">
            <div className="flex min-h-0 flex-1">
              <div className="flex min-w-0 flex-1 justify-center overflow-hidden border-r border-[#444] pr-px shadow-[inset_0_3px_8px_#0008]">
                <div className="h-0 shadow-[0_0_10px_#000a]"><PlanDrawing /></div>
              </div>
              <div className="flex w-4 shrink-0 flex-col items-center bg-[#f0f0f0] py-1">
                <Chevron color="#555" />
                <div className="mt-1 h-5 w-[5px] rounded-full bg-[#888]" />
                <div className="flex-1" />
                <Chevron color="#555" />
              </div>
            </div>
            <StatusBar />
          </div>
        </div>
      </div>
      <div className="flex w-[11px] shrink-0 items-center">
        <button type="button" aria-label="Hide panel" className="flex h-[60px] w-[9px] items-center justify-center rounded-sm border border-[#777] bg-[#d8d8d8]">
          <Icon box="0 0 5 8" w={5} h={8}><path d="m.5 1 3 3-3 3" stroke="#222" strokeWidth="1.500" /></Icon>
        </button>
      </div>
    </main>
  );
}

const sections = [
  { title: "Media", rows: [["Media Type", "Sound"]] },
  { title: "General", rows: [["Printable", "Yes"], ["Locked", "No"], ["Layer", "None", "select"]] },
  { title: "Style", rows: [["Stroke Color", "RGB: 0, 0, 0", "color"], ["Border Width", "1 pt", "width"]] },
  { title: "Activation", rows: [["Enable On", "The content is clicked"], ["Disable On", "'Disable Content' is selected"]] },
];

function PropertyValue({ label, value, kind }) {
  if (kind === "select" || kind === "width") {
    return (
      <div className="flex items-center pr-[5px]">
        {kind === "width" && <span className="mr-1 h-px w-4 bg-black" />}
        <select aria-label={label} className="min-w-0 flex-1 appearance-none outline-none">
          <option>{value}</option>
        </select>
        <Chevron />
      </div>
    );
  }
  if (kind === "color") {
    return (
      <div className="flex items-center gap-[3px]">
        <button type="button" aria-label="Pick stroke color" className="h-[19px] w-[19px] rounded-sm border-2 border-black bg-white" />
        {value}
      </div>
    );
  }
  return value;
}

function PropertiesPanel() {
  return (
    <aside className="flex w-[293px] shrink-0 flex-col border-r border-l-2 border-r-[#ccc] border-l-[#f9e4b0] bg-white">
      <header className="flex h-[25px] shrink-0 items-start justify-between bg-[#f9e4b0] pr-1.5 pl-[3px] leading-6">
        <h2>Rich Media Properties</h2>
        <button type="button" aria-label="Close panel" className="mt-1.5">
          <Icon box="0 0 6 6" w={6} h={6}><path d="m.5.5 5 5M5.500.5l-5 5" stroke="#111" strokeWidth="1.300" /></Icon>
        </button>
      </header>
      <table className="w-full border-separate border-spacing-0">
        {sections.map(s => (
          <tbody key={s.title}>
            <tr className="h-[21px] bg-[#f1f1f1]">
              <th colSpan={2} className="border-b border-[#dedede] p-0 text-left font-semibold text-[#606060]">
                <span className="flex items-center gap-1 pl-1">
                  <Icon box="0 0 10 8" w={10} h={8}><path d="m1 2 4 4 4-4" stroke="#333" strokeWidth="1.500" /></Icon>
                  {s.title}
                </span>
              </th>
            </tr>
            {s.rows.map(([label, value, kind]) => (
              <tr key={label} className="h-[23px]">
                <th scope="row" className="w-[108px] border-r border-b border-[#e2e2e2] p-0 pr-[3px] text-right font-normal text-[#6d6d6d]">{label}</th>
                <td className="border-b border-[#e2e2e2] p-0 pl-0.5"><PropertyValue label={label} value={value} kind={kind} /></td>
              </tr>
            ))}
          </tbody>
        ))}
      </table>
    </aside>
  );
}

export default function App() {
  const [active, setActive] = useState("Comment");
  return (
    <div className="flex h-screen w-full flex-col overflow-hidden rounded-lg bg-[#d4d4d4] font-['Open_Sans',sans-serif] text-[12px] leading-4 text-black">
      <TitleBar />
      <TabRow active={active} onSelect={setActive} />
      <Ribbon />
      <div className="flex min-h-0 flex-1">
        <Document />
        <PropertiesPanel />
      </div>
    </div>
  );
}
